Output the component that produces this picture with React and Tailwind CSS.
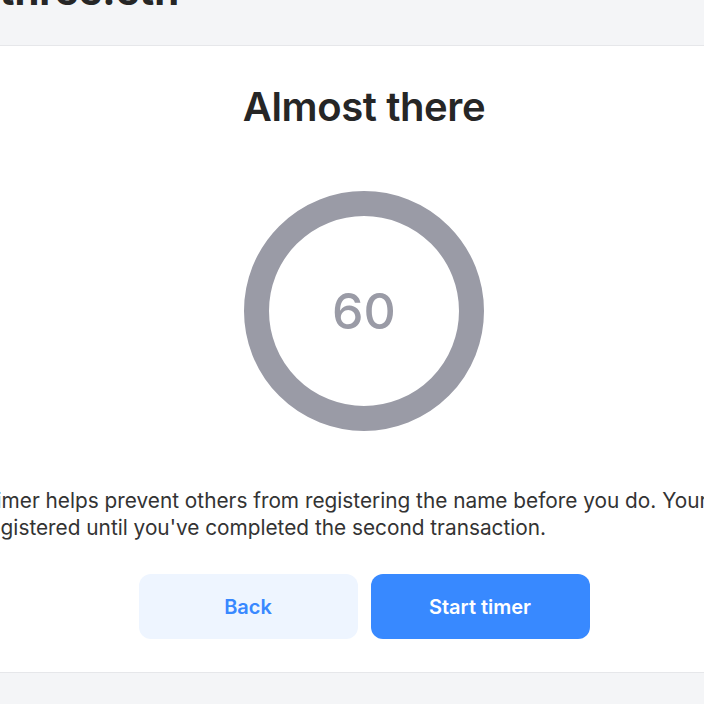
export default function App() {
  return (
    <div className="w-[704px] h-[704px] overflow-hidden flex flex-col bg-white" style={{ fontFamily: "Inter, 'Noto Sans', sans-serif" }}>
      <header className="h-[46px] shrink-0 bg-[#f4f5f7] border-b border-[#e6e7ea] overflow-hidden">
        <div className="-mt-[31px] -ml-[25px] text-[40px] leading-[44px] font-bold text-[#262626] whitespace-nowrap">
          vthree.eth
        </div>
      </header>
      <main className="flex-1 min-h-0 w-[728px] shrink-0 flex flex-col items-center">
        <h1 className="mt-[35px] text-[40px] leading-[52px] font-semibold text-[#262626] tracking-[-0.01em]">Almost there</h1>
        <div className="mt-[58px] w-[240px] h-[240px] rounded-full border-[25px] border-[#9a9ba6] flex items-center justify-center">
          <span className="text-[50px] font-medium text-[#9a9ba6] leading-none">60</span>
        </div>
        <p className="mt-[56px] self-start text-[20.8px] leading-[27px] text-[#333333] whitespace-nowrap">
          <span className="block -ml-[54px]">The timer helps prevent others from registering the name before you do. Your name</span>
          <span className="block -ml-[19px]">registered until you've completed the second transaction.</span>
        </p>
        <div className="mt-[33px] flex gap-[13px]">
          <button className="w-[219px] h-[65px] rounded-[12px] bg-[#eef5ff] text-[#3888ff] text-[20px] font-semibold">Back</button>
          <button className="w-[219px] h-[65px] rounded-[12px] bg-[#3889ff] text-white text-[20px] font-semibold">Start timer</button>
        </div>
      </main>
      <footer className="h-[32px] shrink-0 bg-[#f4f5f7] border-t border-[#e6e7ea]"></footer>
    </div>
  );
}
